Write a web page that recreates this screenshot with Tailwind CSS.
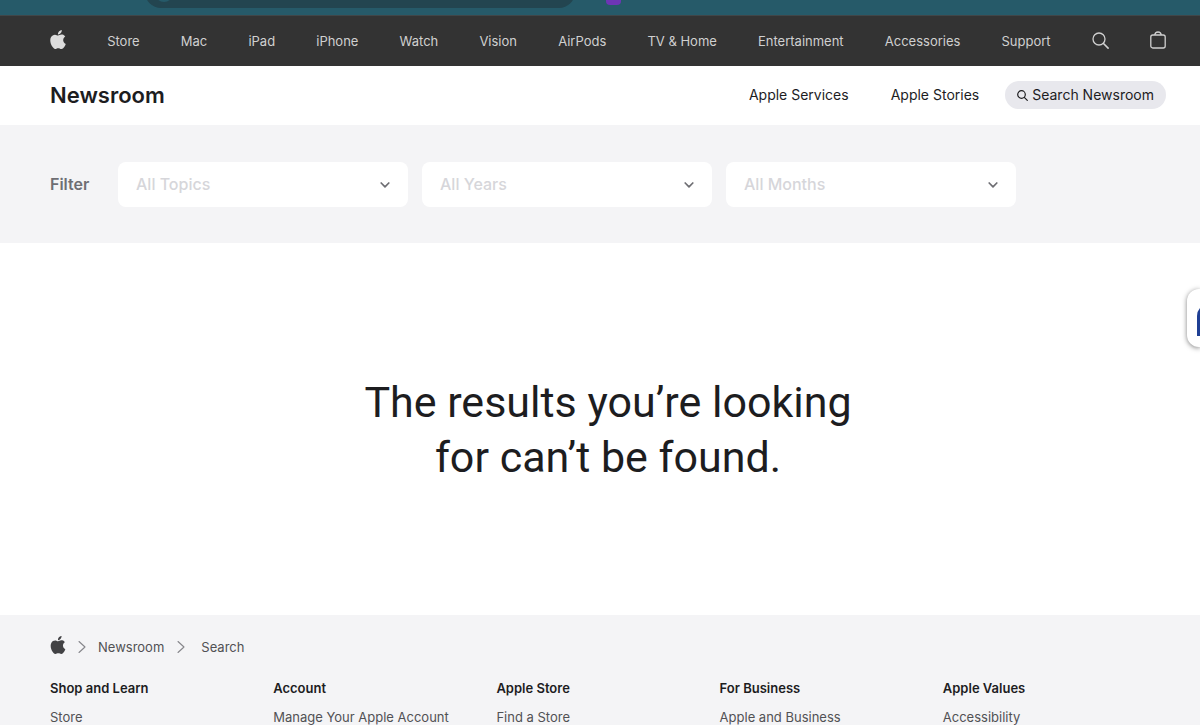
<!DOCTYPE html>
<html lang="en">
<head>
  <meta charset="UTF-8" />
  <meta name="viewport" content="width=device-width, initial-scale=1.0" />
  <title>Newsroom - Search</title>
  <script src="https://cdn.jsdelivr.net/npm/@tailwindcss/browser@4"></script>
</head>
<body class="min-h-screen bg-white font-['Inter','Liberation_Sans',sans-serif] text-[#1d1d1f] overflow-x-hidden">

  <svg class="hidden">
    <symbol id="apple" viewBox="2 0 20 24">
      <path fill="currentColor" d="M12.152 6.896c-.948 0-2.415-1.078-3.96-1.04-2.04.027-3.91 1.183-4.961 3.014-2.117 3.675-.546 9.103 1.519 12.09 1.013 1.454 2.208 3.09 3.792 3.039 1.52-.065 2.09-.987 3.935-.987 1.831 0 2.35.987 3.96.948 1.637-.026 2.676-1.48 3.676-2.948 1.156-1.688 1.636-3.325 1.662-3.415-.039-.013-3.182-1.221-3.22-4.857-.026-3.04 2.48-4.494 2.597-4.559-1.429-2.09-3.623-2.324-4.39-2.376-2-.156-3.675 1.09-4.61 1.09zM15.53 3.83c.843-1.012 1.4-2.427 1.245-3.83-1.207.052-2.662.805-3.532 1.818-.78.896-1.454 2.338-1.273 3.714 1.338.104 2.715-.688 3.559-1.701" />
    </symbol>
    <symbol id="down" viewBox="0 0 10 6">
      <path fill="none" stroke="currentColor" stroke-width="1.7" stroke-linecap="round" stroke-linejoin="round" d="M1.2 1 5 4.8 8.8 1" />
    </symbol>
    <symbol id="next" viewBox="0 0 8 14">
      <path fill="none" stroke="currentColor" stroke-width="1.1" stroke-linecap="round" stroke-linejoin="round" d="M1 1.5 7 7 1 12.5" />
    </symbol>
  </svg>

  <!-- Browser toolbar edge -->
  <div class="h-[15px] bg-[#265a69] pl-[145px] flex items-start gap-[31px]">
    <div class="w-[430px] h-2 overflow-hidden flex items-end">
      <div class="w-full h-8 shrink-0 rounded-full bg-[#234550] pl-[10px] flex flex-col justify-end pb-[6px]">
        <div class="w-[18px] h-[18px] rounded-full bg-[#265a69]"></div>
      </div>
    </div>
    <div class="w-[15px] h-[5px] rounded-b-sm bg-[#6d35b5]"></div>
  </div>

  <!-- Global nav -->
  <nav class="h-[51px] bg-[#333333] border-t border-[#404648] pl-[50px] pr-[34px] pb-px flex items-center justify-between text-[13px] leading-5 text-[#d0d0d0]">
    <a href="#" aria-label="Apple" class="pb-[2px]"><svg class="w-4 h-[19px] text-[#dcdcdc]"><use href="#apple" /></svg></a>
    <a href="#">Store</a>
    <a href="#">Mac</a>
    <a href="#">iPad</a>
    <a href="#">iPhone</a>
    <a href="#">Watch</a>
    <a href="#">Vision</a>
    <a href="#">AirPods</a>
    <a href="#">TV &amp; Home</a>
    <a href="#">Entertainment</a>
    <a href="#">Accessories</a>
    <a href="#">Support</a>
    <button aria-label="Search">
      <svg class="w-[17px] h-[17px]" viewBox="0 0 17 17" fill="none" stroke="currentColor" stroke-linecap="round">
        <circle cx="7" cy="7" r="6" stroke-width="1.3" />
        <path stroke-width="1.6" d="m11.5 11.5 4.6 4.6" />
      </svg>
    </button>
    <button aria-label="Shopping Bag" class="pb-[2px]">
      <svg class="w-4 h-[18px]" viewBox="0 0 16 18" fill="none" stroke="currentColor" stroke-width="1.3">
        <rect x=".8" y="4" width="14.4" height="13" rx="2" />
        <path d="M4.8 4C5 2 6.2 1 8 1s3 1 3.2 3" />
      </svg>
    </button>
  </nav>

  <!-- Local nav -->
  <header class="h-[59px] pl-[50px] pr-[34px] pb-px flex items-center">
    <a href="#" class="text-[22px] leading-7 font-semibold">Newsroom</a>
    <div class="ml-auto flex items-center text-sm">
      <a href="#">Apple Services</a>
      <a href="#" class="ml-[42px]">Apple Stories</a>
      <button class="ml-[26px] h-7 px-3 rounded-full bg-[#e8e8ed] flex items-center gap-1">
        <svg class="w-[11px] h-[11px]" viewBox="0 0 11 11" fill="none" stroke="currentColor" stroke-width="1.2" stroke-linecap="round">
          <circle cx="4.5" cy="4.5" r="3.8" />
          <path d="m7.3 7.3 3 3" />
        </svg>
        Search Newsroom
      </button>
    </div>
  </header>

  <!-- Filters -->
  <form class="h-[118px] bg-[#f4f4f6] pl-[50px] pr-[34px] flex items-center gap-[14px] text-base">
    <span class="w-[54px] font-semibold text-[#6e6e73]">Filter</span>
    <label class="relative flex-1 max-w-[290px] text-[#6e6e73]">
      <select aria-label="Topics" class="appearance-none w-full h-[45px] px-[18px] rounded-lg bg-white font-medium text-[#d6d6da]">
        <option>All Topics</option>
      </select>
      <svg class="absolute right-[18px] top-5 w-[10px] h-[6px] pointer-events-none"><use href="#down" /></svg>
    </label>
    <label class="relative flex-1 max-w-[290px] text-[#6e6e73]">
      <select aria-label="Years" class="appearance-none w-full h-[45px] px-[18px] rounded-lg bg-white font-medium text-[#d6d6da]">
        <option>All Years</option>
      </select>
      <svg class="absolute right-[18px] top-5 w-[10px] h-[6px] pointer-events-none"><use href="#down" /></svg>
    </label>
    <label class="relative flex-1 max-w-[290px] text-[#6e6e73]">
      <select aria-label="Months" class="appearance-none w-full h-[45px] px-[18px] rounded-lg bg-white font-medium text-[#d6d6da]">
        <option>All Months</option>
      </select>
      <svg class="absolute right-[18px] top-5 w-[10px] h-[6px] pointer-events-none"><use href="#down" /></svg>
    </label>
  </form>

  <main class="pl-[50px] pr-[34px] pt-[132px] pb-[130px] text-center">
    <h1 class="font-['Roboto','Inter',sans-serif] text-[43px] leading-[55px]">The results you’re looking<br />for can’t be found.</h1>
  </main>

  <!-- Floating side tab -->
  <div class="fixed right-0 top-[289px] w-[13px] h-[58px] pl-[10px] pt-[15px] rounded-l-xl bg-white shadow-[0_1px_5px_rgba(0,0,0,0.5)] overflow-hidden">
    <div class="w-[14px] h-8 rounded-tl-xl bg-[#1f3f94]"></div>
  </div>

  <footer class="bg-[#f4f4f6] pl-[50px] pr-[34px] pt-[21px] text-[13px] leading-5 text-[#515154]">
    <div class="flex items-center">
      <a href="#" aria-label="Apple" class="pb-1"><svg class="w-4 h-[18px] text-[#424245]"><use href="#apple" /></svg></a>
      <svg class="w-2 h-[14px] ml-3 text-[#86868b]"><use href="#next" /></svg>
      <a href="#" class="ml-3">Newsroom</a>
      <svg class="w-2 h-[14px] ml-[13px] text-[#86868b]"><use href="#next" /></svg>
      <span class="ml-4">Search</span>
    </div>
    <div class="grid grid-cols-5 mt-5">
      <div>
        <h3 class="font-semibold text-[#1d1d1f] mb-[9px]">Shop and Learn</h3>
        <a href="#">Store</a>
      </div>
      <div>
        <h3 class="font-semibold text-[#1d1d1f] mb-[9px]">Account</h3>
        <a href="#">Manage Your Apple Account</a>
      </div>
      <div>
        <h3 class="font-semibold text-[#1d1d1f] mb-[9px]">Apple Store</h3>
        <a href="#">Find a Store</a>
      </div>
      <div>
        <h3 class="font-semibold text-[#1d1d1f] mb-[9px]">For Business</h3>
        <a href="#">Apple and Business</a>
      </div>
      <div>
        <h3 class="font-semibold text-[#1d1d1f] mb-[9px]">Apple Values</h3>
        <a href="#">Accessibility</a>
      </div>
    </div>
  </footer>

</body>
</html>
